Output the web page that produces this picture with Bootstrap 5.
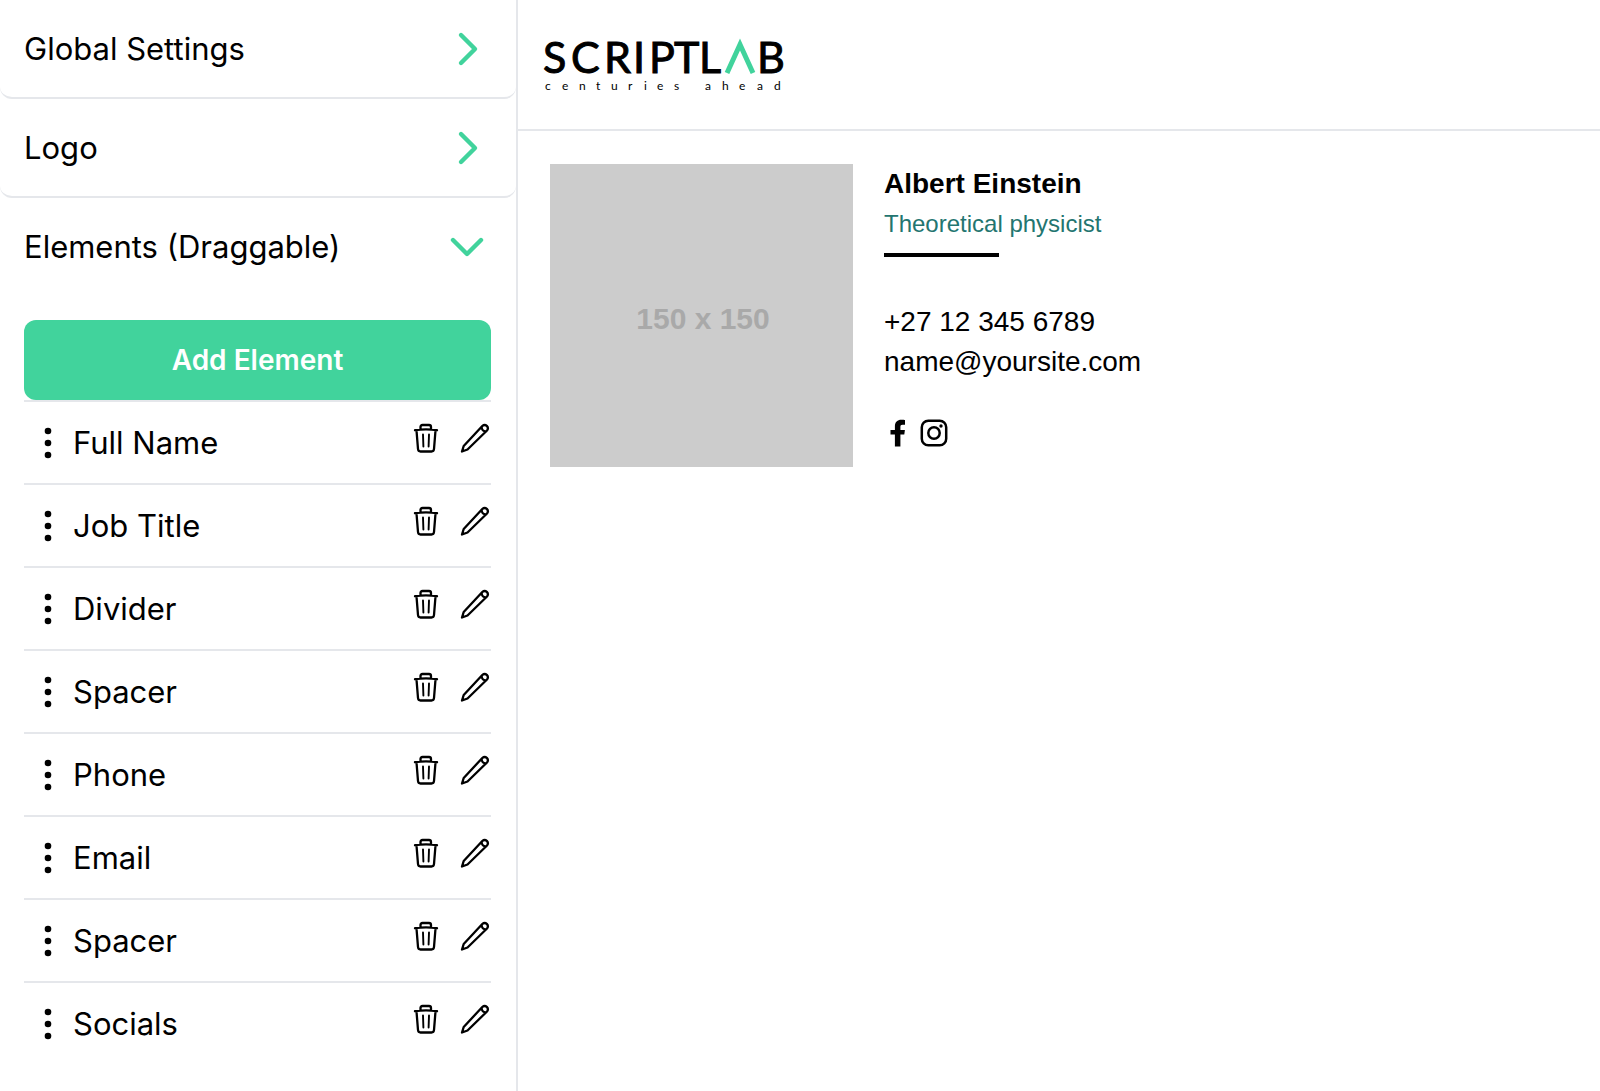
<!DOCTYPE html>
<html lang="en">
<head>
<meta charset="utf-8">
<meta name="viewport" content="width=device-width, initial-scale=1">
<title>Signature editor</title>
<link rel="stylesheet" href="https://cdn.jsdelivr.net/npm/bootstrap@5.3.0/dist/css/bootstrap.min.css">
<style>
  :root { --brand: #41d39c; --line: #e5e7eb; }
  body { font-family: Inter, "Liberation Sans", sans-serif; color: #000; }
  .sidebar { width: 518px; border-right: 2px solid var(--line); }
  .panel-toggle { height: 99px; padding: 1px 30px 0 24px; font-size: 31px; line-height: 40px; background: none; border: 0; border-bottom: 2px solid var(--line); border-radius: 0 0 12px 12px; color: #000; }
  .panel-toggle.is-open { border-bottom-color: transparent; }
  .panel-toggle svg { width: 36px; height: 36px; fill: none; stroke: var(--brand); stroke-width: 4.400; stroke-linecap: round; stroke-linejoin: round; }
  .panel-body { padding: 23px 25px 24px 24px; }
  .btn-add { --bs-btn-bg: var(--brand); --bs-btn-color: #fff; --bs-btn-hover-bg: #36bf8b; --bs-btn-hover-color: #fff; height: 80px; font-size: 28px; font-weight: 600; border: 0; border-radius: 12px; }
  .element-row { height: 83px; padding-left: 20px; border-top: 2px solid var(--line); font-size: 31px; line-height: 40px; }
  .element-name { padding-top: 1px; }
  .drag-dots { width: 8px; height: 32px; margin-right: 21px; cursor: grab; }
  .icon-btn { padding: 0; border: 0; background: none; color: #000; line-height: 0; }
  .icon-btn svg { width: 30px; height: 30px; fill: none; stroke: currentColor; stroke-width: 2.300; stroke-linecap: round; stroke-linejoin: round; }
  .row-tools { gap: 18px; margin: 0 1px 9px 0; }
  .top-bar { height: 131px; padding: 32px 24px; border-bottom: 2px solid var(--line); }
  .brand-mark { width: 248px; height: 64px; display: block; font-family: Lato, sans-serif; }
  .signature { padding: 33px 32px; gap: 31px; font-family: "Liberation Sans", Arial, sans-serif; font-size: 28px; line-height: 40px; }
  .photo-slot { width: 303px; height: 303px; padding: 6px 0 0 3px; background: #ccc; color: #a9a9a9; font-size: 30px; font-weight: 700; }
  .job-title { font-size: 24px; color: #237570; }
  .rule { width: 115px; height: 4px; margin: 9px 0 45px; background: #000; }
  .socials { margin-top: 37px; gap: 8px; line-height: 0; }
  .socials a { color: #000; }
</style>
<script src="https://cdn.jsdelivr.net/npm/bootstrap@5.3.0/dist/js/bootstrap.bundle.min.js"></script>
</head>
<body>
<svg class="d-none" aria-hidden="true">
  <symbol id="right" viewBox="0 0 36 36"><path d="M11 4l14 14-14 14"/></symbol>
  <symbol id="down" viewBox="0 0 36 36"><path d="M3 11l14 14 14-14"/></symbol>
  <symbol id="dots" viewBox="0 0 8 32"><circle cx="4" cy="4" r="3.300"/><circle cx="4" cy="16" r="3.300"/><circle cx="4" cy="28" r="3.300"/></symbol>
  <symbol id="trash" viewBox="0 0 30 30"><path d="M3 7.200Q14 5.400 25 7.200M8.500 6V4Q8.500 2 10.500 2H17Q19 2 19 4V6M4.500 7.500L6 26Q6.200 28.500 8.500 28.500H19.500Q21.800 28.500 22 26L23.500 7.500"/><path stroke-width="1.900" d="M11 11.500L11.400 23.500M17 11.500L16.600 23.500"/></symbol>
  <symbol id="pencil" viewBox="0 0 30 30"><path d="M2 28.500L3.700 23 22.300 3Q24.600 .9 26.800 2.900 28.900 5.200 27 7.500L7.500 26.500ZM21.700 3.900C21.500 6.800 23.300 8.600 26.200 8.300"/></symbol>
</svg>
<div class="d-flex min-vh-100">
  <aside class="sidebar flex-shrink-0">
    <button type="button" class="panel-toggle d-flex w-100 align-items-center justify-content-between">Global Settings<svg aria-hidden="true"><use href="#right"/></svg></button>
    <button type="button" class="panel-toggle d-flex w-100 align-items-center justify-content-between">Logo<svg aria-hidden="true"><use href="#right"/></svg></button>
    <button type="button" class="panel-toggle is-open d-flex w-100 align-items-center justify-content-between" aria-expanded="true" aria-controls="elements">Elements (Draggable)<svg aria-hidden="true"><use href="#down"/></svg></button>
    <div class="panel-body" id="elements">
      <button type="button" class="btn btn-add d-block w-100">Add Element</button>
      <ul class="list-unstyled mb-0" id="element-list">
        <li class="element-row d-flex align-items-center"><svg class="drag-dots" aria-hidden="true"><use href="#dots"/></svg><span class="element-name me-auto">Full Name</span><span class="row-tools d-flex"><button type="button" class="icon-btn" aria-label="Delete"><svg><use href="#trash"/></svg></button><button type="button" class="icon-btn" aria-label="Edit"><svg><use href="#pencil"/></svg></button></span></li>
        <li class="element-row d-flex align-items-center"><svg class="drag-dots" aria-hidden="true"><use href="#dots"/></svg><span class="element-name me-auto">Job Title</span><span class="row-tools d-flex"><button type="button" class="icon-btn" aria-label="Delete"><svg><use href="#trash"/></svg></button><button type="button" class="icon-btn" aria-label="Edit"><svg><use href="#pencil"/></svg></button></span></li>
        <li class="element-row d-flex align-items-center"><svg class="drag-dots" aria-hidden="true"><use href="#dots"/></svg><span class="element-name me-auto">Divider</span><span class="row-tools d-flex"><button type="button" class="icon-btn" aria-label="Delete"><svg><use href="#trash"/></svg></button><button type="button" class="icon-btn" aria-label="Edit"><svg><use href="#pencil"/></svg></button></span></li>
        <li class="element-row d-flex align-items-center"><svg class="drag-dots" aria-hidden="true"><use href="#dots"/></svg><span class="element-name me-auto">Spacer</span><span class="row-tools d-flex"><button type="button" class="icon-btn" aria-label="Delete"><svg><use href="#trash"/></svg></button><button type="button" class="icon-btn" aria-label="Edit"><svg><use href="#pencil"/></svg></button></span></li>
        <li class="element-row d-flex align-items-center"><svg class="drag-dots" aria-hidden="true"><use href="#dots"/></svg><span class="element-name me-auto">Phone</span><span class="row-tools d-flex"><button type="button" class="icon-btn" aria-label="Delete"><svg><use href="#trash"/></svg></button><button type="button" class="icon-btn" aria-label="Edit"><svg><use href="#pencil"/></svg></button></span></li>
        <li class="element-row d-flex align-items-center"><svg class="drag-dots" aria-hidden="true"><use href="#dots"/></svg><span class="element-name me-auto">Email</span><span class="row-tools d-flex"><button type="button" class="icon-btn" aria-label="Delete"><svg><use href="#trash"/></svg></button><button type="button" class="icon-btn" aria-label="Edit"><svg><use href="#pencil"/></svg></button></span></li>
        <li class="element-row d-flex align-items-center"><svg class="drag-dots" aria-hidden="true"><use href="#dots"/></svg><span class="element-name me-auto">Spacer</span><span class="row-tools d-flex"><button type="button" class="icon-btn" aria-label="Delete"><svg><use href="#trash"/></svg></button><button type="button" class="icon-btn" aria-label="Edit"><svg><use href="#pencil"/></svg></button></span></li>
        <li class="element-row d-flex align-items-center"><svg class="drag-dots" aria-hidden="true"><use href="#dots"/></svg><span class="element-name me-auto">Socials</span><span class="row-tools d-flex"><button type="button" class="icon-btn" aria-label="Delete"><svg><use href="#trash"/></svg></button><button type="button" class="icon-btn" aria-label="Edit"><svg><use href="#pencil"/></svg></button></span></li>
      </ul>
    </div>
  </aside>
  <main class="flex-grow-1">
    <header class="top-bar">
      <svg class="brand-mark overflow-visible" viewBox="0 0 248 64" role="img" aria-label="Scriptlab, centuries ahead">
        <text x="1 29 62 91 107 132 157 215" y="41" font-size="43" stroke="#000" stroke-width="1">SCRIPTLB</text>
        <path d="M185 41L198 12.500 211 41" fill="none" stroke="#41d39c" stroke-width="5"/>
        <text x="3 20 37 54 69 86 102 115 132 145 163 180 197 215 232" y="58" font-size="12">centuries ahead</text>
      </svg>
    </header>
    <section class="signature d-flex align-items-start">
      <div class="photo-slot d-flex align-items-center justify-content-center flex-shrink-0">150 x 150</div>
      <div>
        <div class="fw-bold">Albert Einstein</div>
        <div class="job-title">Theoretical physicist</div>
        <div class="rule"></div>
        <div>+27 12 345 6789</div>
        <div>name@yoursite.com</div>
        <div class="socials d-flex">
          <a href="#" aria-label="Facebook"><svg width="28" height="28" viewBox="0 0 28 28" fill="currentColor"><path d="M21 1v4.700h-2.400c-1.800 0-2.200.9-2.200 2.200v3h4.500l-.6 4.600h-3.900V27.500h-5.500V15.500H6.500v-4.600h4.400V7.200C10.900 3 13.500 .8 17.300.8c1.700 0 3.200.1 3.700.2z"/></svg></a>
          <a href="#" aria-label="Instagram"><svg width="28" height="28" viewBox="0 0 28 28" fill="none" stroke="currentColor" stroke-width="2.500"><rect x="1.800" y="1.800" width="24.400" height="24.400" rx="6.500"/><circle cx="14" cy="14" r="5.700"/><circle cx="21" cy="7" r="1.700" fill="currentColor" stroke="none"/></svg></a>
        </div>
      </div>
    </section>
  </main>
</div>
</body>
</html>
